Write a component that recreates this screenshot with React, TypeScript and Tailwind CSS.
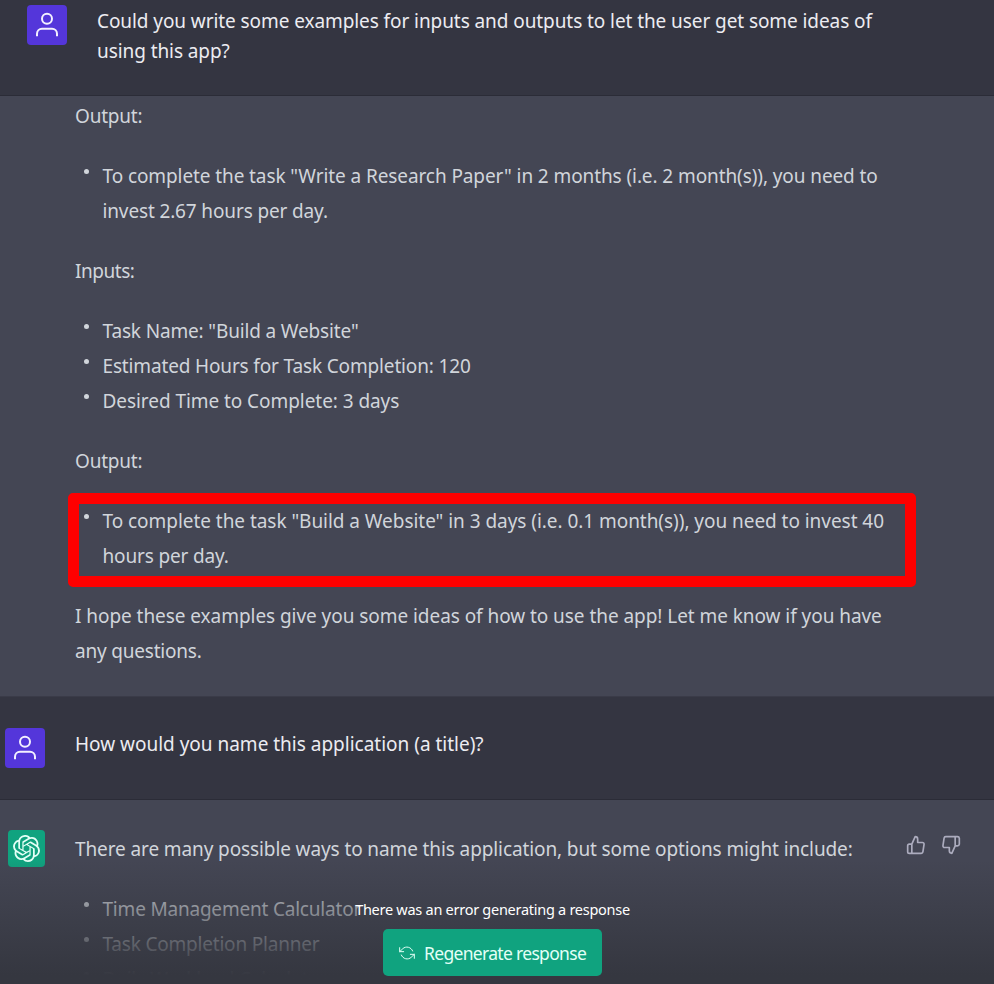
import type { ReactNode } from "react";
import { SiOpenai } from "react-icons/si";

function UserAvatar() {
  return (
    <div className="flex size-10 shrink-0 items-center justify-center rounded-sm bg-[#5436da]">
      <svg viewBox="0 0 24 24" className="size-[30px]" fill="none" stroke="#f3f0ff" strokeWidth="1.6" strokeLinejoin="round">
        <path d="M20 21v-2a4 4 0 0 0-4-4H8a4 4 0 0 0-4 4v2" />
        <circle cx="12" cy="7" r="4" />
      </svg>
    </div>
  );
}

function Item({ children }: { children: ReactNode }) {
  return (
    <li className="flex">
      <span className="mt-[10px] mr-[13.5px] ml-[9px] size-[5px] shrink-0 rounded-full bg-[#d1d5db]" />
      <div className="whitespace-nowrap">{children}</div>
    </li>
  );
}

export default function App() {
  return (
    <div className="relative flex h-[984px] w-[994px] flex-col overflow-hidden bg-[#444654] font-['Noto_Sans','Open_Sans',sans-serif] text-[19px] leading-[35px] tracking-[-0.08px] text-[#d1d5db]">
      <section className="flex h-24 shrink-0 gap-[30px] border-b border-[#2b2c37] bg-[#343541] pt-[5px] pl-[27px] leading-[30px] text-[#ececf1]">
        <UserAvatar />
        <div className="mt-px whitespace-nowrap">
          <p>Could you write some examples for inputs and outputs to let the user get some ideas of</p>
          <p>using this app?</p>
        </div>
      </section>

      <section className="relative flex h-[601px] shrink-0 flex-col gap-[25px] border-b border-[#3a3b48] pt-[3px] pl-[75px] whitespace-nowrap">
        <p className="tracking-[-0.2px]">Output:</p>
        <ul>
          <Item>
            <p className="tracking-[-0.095px]">To complete the task "Write a Research Paper" in 2 months (i.e. 2 month(s)), you need to</p>
            <p className="tracking-[-0.14px]">invest 2.67 hours per day.</p>
          </Item>
        </ul>
        <p className="tracking-[-0.45px]">Inputs:</p>
        <ul className="tracking-[-0.15px]">
          <Item>Task Name: "Build a Website"</Item>
          <Item>Estimated Hours for Task Completion: 120</Item>
          <Item>
            <span className="tracking-[-0.06px]">Desired Time to Complete: 3 days</span>
          </Item>
        </ul>
        <p className="tracking-[-0.2px]">Output:</p>
        <ul>
          <Item>
            <p className="tracking-[-0.045px]">To complete the task "Build a Website" in 3 days (i.e. 0.1 month(s)), you need to invest 40</p>
            <p className="tracking-[-0.16px]">hours per day.</p>
          </Item>
        </ul>
        <div>
          <p className="tracking-[-0.055px]">I hope these examples give you some ideas of how to use the app! Let me know if you have</p>
          <p className="tracking-[-0.2px]">any questions.</p>
        </div>
        <div className="absolute top-[397px] left-[68px] h-[94px] w-[848px] rounded-[5px] border-[11px] border-[#fe0000]" />
      </section>

      <section className="flex h-[103px] shrink-0 gap-[30px] border-b border-[#2b2c37] bg-[#343541] pt-[31px] pl-[5px] leading-[32px] text-[#ececf1]">
        <UserAvatar />
        <p className="tracking-[-0.01px] whitespace-nowrap">How would you name this application (a title)?</p>
      </section>

      <section className="flex h-[184px] shrink-0 pt-[30px] pl-2">
        <div className="flex size-[37px] shrink-0 items-center justify-center rounded-sm bg-[#10a37f]">
          <SiOpenai className="size-[27px] text-[#e3fff6]" />
        </div>
        <div className="ml-[30px] flex w-[831px] shrink-0 flex-col gap-[25px] whitespace-nowrap">
          <p className="mt-[2px] tracking-[-0.11px]">There are many possible ways to name this application, but some options might include:</p>
          <ul className="tracking-[-0.2px]">
            <Item>Time Management Calculator</Item>
            <Item>Task Completion Planner</Item>
            <Item>Daily Workload Calculator</Item>
          </ul>
        </div>
        <div className="mt-[5px] flex gap-[15px] text-[#acacbe]">
          <svg viewBox="0 0 24 24" className="size-5" fill="none" stroke="currentColor" strokeWidth="2" strokeLinecap="round" strokeLinejoin="round">
            <path d="M14 9V5a3 3 0 0 0-3-3l-4 9v11h11.28a2 2 0 0 0 2-1.7l1.38-9a2 2 0 0 0-2-2.3zM7 22H4a2 2 0 0 1-2-2v-7a2 2 0 0 1 2-2h3" />
          </svg>
          <svg viewBox="0 0 24 24" className="size-5" fill="none" stroke="currentColor" strokeWidth="2" strokeLinecap="round" strokeLinejoin="round">
            <path d="M10 15v4a3 3 0 0 0 3 3l4-9V2H5.72a2 2 0 0 0-2 1.7l-1.38 9a2 2 0 0 0 2 2.3zm7-13h2.67A2.31 2.31 0 0 1 22 4v7a2.31 2.31 0 0 1-2.33 2H17" />
          </svg>
        </div>
      </section>

      <div className="absolute inset-x-0 bottom-0 flex h-[124px] flex-col items-center bg-linear-to-b from-[#353740]/0 to-[#353740] to-93% pt-[38px] pr-[9px]">
        <p className="text-[14.5px] leading-[22px] tracking-[-0.27px] text-white">There was an error generating a response</p>
        <button className="mt-[9px] flex h-[47px] w-[219px] items-center gap-[9px] rounded-[5px] bg-[#10a37f] pt-[2px] pl-4 text-[17.5px] tracking-[-0.68px] whitespace-nowrap text-[#e3fff6]">
          <svg viewBox="0 0 24 24" className="-mt-[2px] size-4 shrink-0" fill="none" stroke="currentColor" strokeWidth="1.5" strokeLinecap="round" strokeLinejoin="round">
            <path d="M1 4v6h6M23 20v-6h-6" />
            <path d="M20.49 9A9 9 0 0 0 5.64 5.64L1 10m22 4-4.64 4.36A9 9 0 0 1 3.51 15" />
          </svg>
          Regenerate response
        </button>
      </div>
    </div>
  );
}
